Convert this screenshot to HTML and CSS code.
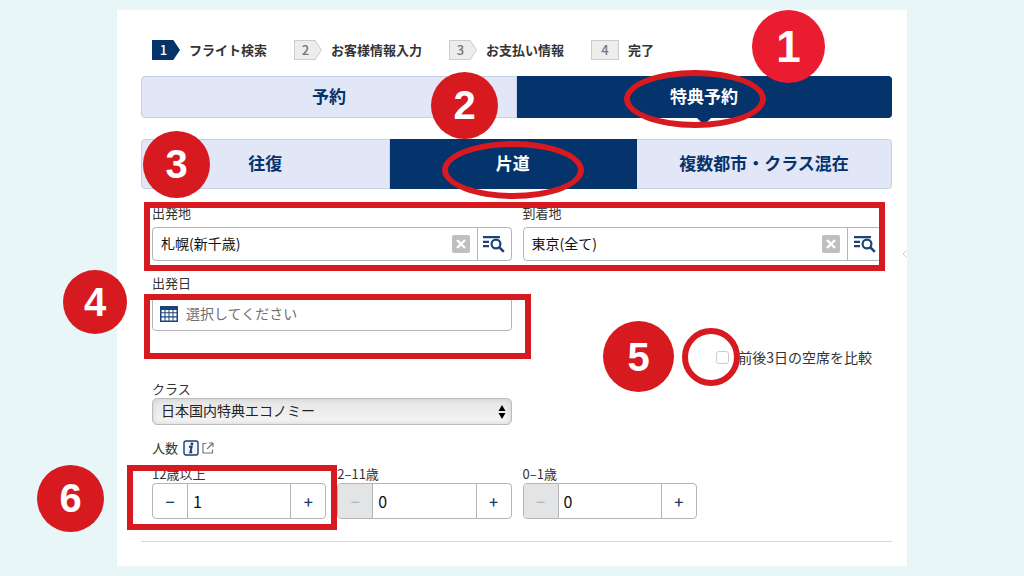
FILE: index.html
```html
<!DOCTYPE html>
<html lang="ja">
<head>
    <meta charset="UTF-8">
    <meta name="viewport" content="width=device-width, initial-scale=1.0">
    <title>特典予約 フライト検索</title>
    <link rel="stylesheet" href="styles.css">
</head>
<body>
    <!-- Shared icons -->
    <svg class="sprite" aria-hidden="true">
        <symbol id="icon-list-search" viewBox="0 0 22 18">
            <path d="M0 2.2h17M0 6.8h6M0 11.2h6" fill="none" stroke="currentColor" stroke-width="2.2"/>
            <circle cx="13" cy="9" r="4.4" fill="none" stroke="currentColor" stroke-width="2.2"/>
            <path d="M16.2 12.2l4.6 4.6" fill="none" stroke="currentColor" stroke-width="2.6"/>
        </symbol>
        <symbol id="icon-clear" viewBox="0 0 18 18">
            <rect width="18" height="18" rx="2" fill="#bfbfbf"/>
            <path d="M5 5l8 8M13 5l-8 8" stroke="#fff" stroke-width="2.4"/>
        </symbol>
    </svg>

    <main class="panel">
        <ol class="steps">
            <li class="step current"><span class="step-no">1</span>フライト検索</li>
            <li class="step"><span class="step-no">2</span>お客様情報入力</li>
            <li class="step"><span class="step-no">3</span>お支払い情報</li>
            <li class="step last"><span class="step-no">4</span>完了</li>
        </ol>

        <div class="tabs main-tabs">
            <button type="button" class="tab">予約</button>
            <button type="button" class="tab active">特典予約
                <span class="mark oval oval-award"></span>
            </button>
            <span class="badge badge-1">1</span>
            <span class="badge badge-2">2</span>
        </div>

        <div class="tabs trip-tabs">
            <button type="button" class="tab">往復</button>
            <button type="button" class="tab active">片道
                <span class="mark oval oval-oneway"></span>
            </button>
            <button type="button" class="tab">複数都市・クラス混在</button>
            <span class="badge badge-3">3</span>
        </div>

        <form class="search-form">
            <div class="row places">
                <div class="field">
                    <label for="from">出発地</label>
                    <div class="box">
                        <input type="text" id="from" value="札幌(新千歳)">
                        <button type="button" class="clear" aria-label="クリア"><svg><use href="#icon-clear"/></svg></button>
                        <button type="button" class="lookup" aria-label="出発地を検索"><svg><use href="#icon-list-search"/></svg></button>
                    </div>
                </div>
                <div class="field">
                    <label for="to">到着地</label>
                    <div class="box">
                        <input type="text" id="to" value="東京(全て)">
                        <button type="button" class="clear" aria-label="クリア"><svg><use href="#icon-clear"/></svg></button>
                        <button type="button" class="lookup" aria-label="到着地を検索"><svg><use href="#icon-list-search"/></svg></button>
                    </div>
                </div>
                <span class="mark frame-places"></span>
            </div>

            <div class="row dates">
                <div class="field">
                    <label for="date">出発日</label>
                    <div class="box">
                        <svg class="calendar" viewBox="0 0 18 16" aria-hidden="true">
                            <rect width="18" height="16" fill="#1c4478"/>
                            <path d="M1.5 4h3v2.3h-3zM5.5 4h3v2.3h-3zM9.5 4h3v2.3h-3zM13.5 4h3v2.3h-3zM1.5 7.3h3v3h-3zM5.5 7.3h3v3h-3zM9.5 7.3h3v3h-3zM13.5 7.3h3v3h-3zM1.5 11.4h3v3h-3zM5.5 11.4h3v3h-3zM9.5 11.4h3v3h-3zM13.5 11.4h3v3h-3z" fill="#fff"/>
                        </svg>
                        <input type="text" id="date" placeholder="選択してください">
                    </div>
                    <span class="mark frame-date"></span>
                </div>
                <span class="badge badge-4">4</span>
            </div>

            <div class="compare">
                <input type="checkbox" id="compare">
                <label for="compare">前後3日の空席を比較</label>
                <span class="mark oval oval-compare"></span>
                <span class="badge badge-5">5</span>
            </div>

            <div class="row">
                <div class="field">
                    <label for="cabin">クラス</label>
                    <div class="select">
                        <select id="cabin">
                            <option>日本国内特典エコノミー</option>
                        </select>
                        <svg class="arrows" viewBox="0 0 8 14" aria-hidden="true"><path d="M4 0l3.5 6h-7zM4 14l3.5-6h-7z"/></svg>
                    </div>
                </div>
            </div>

            <div class="people-title">
                人数
                <a href="#" aria-label="人数について">
                    <svg class="info" viewBox="0 0 16 16">
                        <rect x="1" y="1" width="14" height="14" rx="2" fill="#f3f6fb" stroke="#1c3d70" stroke-width="1.4"/>
                        <circle cx="8.9" cy="4" r="1.4" fill="#1c3d70"/>
                        <path d="M6 6.8h2.7L7.3 12.2h1.9" fill="none" stroke="#1c3d70" stroke-width="1.9"/>
                    </svg>
                    <svg class="external" viewBox="0 0 12 12">
                        <path d="M4.5 1.5H1v9.5h9.5V7.5M7 1h4v4M11 1L5 7" fill="none" stroke="#777" stroke-width="1.2"/>
                    </svg>
                </a>
            </div>

            <div class="people">
                <div class="field">
                    <label for="adult">12歳以上</label>
                    <div class="stepper">
                        <button type="button" aria-label="減らす">−</button>
                        <input type="text" id="adult" value="1">
                        <button type="button" aria-label="増やす">+</button>
                    </div>
                    <span class="mark frame-adult"></span>
                    <span class="badge badge-6">6</span>
                </div>
                <div class="field">
                    <label for="child">2–11歳</label>
                    <div class="stepper">
                        <button type="button" aria-label="減らす" disabled>−</button>
                        <input type="text" id="child" value="0">
                        <button type="button" aria-label="増やす">+</button>
                    </div>
                </div>
                <div class="field">
                    <label for="infant">0–1歳</label>
                    <div class="stepper">
                        <button type="button" aria-label="減らす" disabled>−</button>
                        <input type="text" id="infant" value="0">
                        <button type="button" aria-label="増やす">+</button>
                    </div>
                </div>
            </div>
        </form>

        <hr>
        <svg class="side-arrow" viewBox="0 0 5 8" aria-hidden="true"><path d="M4.5 .5L1 4l3.5 3.5" fill="none" stroke="#ccc"/></svg>
    </main>
</body>
</html>
```
FILE: styles.css
```css
* {
    box-sizing: border-box;
}

body {
    margin: 0;
    padding: 10px;
    background: #e9f6f8;
    color: #333;
    font-family: "Noto Sans CJK JP", sans-serif;
    font-size: 14px;
}

button,
input,
select {
    margin: 0;
    padding: 0;
    border: none;
    background: none;
    color: inherit;
    font: inherit;
}

.sprite {
    display: none;
}

.panel {
    position: relative;
    max-width: 790px;
    margin: 0 auto;
    padding: 30px 15px 24px 24px;
    background: #fff;
}

/* Progress steps */
.steps {
    display: flex;
    gap: 27px;
    margin: 0 0 16px;
    padding: 0 0 0 11px;
    list-style: none;
}

.step {
    display: flex;
    align-items: center;
    gap: 9px;
    font-size: 13px;
    line-height: 20px;
    font-weight: bold;
}

.step-no {
    position: relative;
    z-index: 0;
    width: 28px;
    height: 20px;
    padding-right: 5px;
    background: #ccc;
    color: #777;
    text-align: center;
    font-weight: 500;
    clip-path: polygon(0 0, 76% 0, 100% 50%, 76% 100%, 0 100%);
}

.step-no::before {
    content: "";
    position: absolute;
    z-index: -1;
    inset: 1px;
    background: #ededed;
    clip-path: polygon(0 0, 76% 0, 100% 50%, 76% 100%, 0 100%);
}

.step.current .step-no,
.step.current .step-no::before {
    background: #05336b;
    color: #fff;
}

.step.last .step-no {
    padding-right: 0;
}

.step.last .step-no,
.step.last .step-no::before {
    clip-path: none;
}

/* Tabs */
.tabs {
    position: relative;
    display: flex;
}

.tab {
    position: relative;
    flex: 1;
    padding-bottom: 2px;
    border: 1px solid #c6d0e4;
    background: #e1e7f7;
    color: #05336b;
    font-size: 17px;
    line-height: 24px;
    font-weight: bold;
}

.tab:first-child {
    border-radius: 4px 0 0 4px;
}

.tab:nth-of-type(n + 2) {
    border-left: none;
}

.tab.active {
    border-color: #05336b;
    background: #05336b;
    color: #fff;
}

.main-tabs {
    height: 42px;
    margin-bottom: 21px;
}

.main-tabs .active {
    border-radius: 0 4px 4px 0;
}

.main-tabs .active::after {
    content: "";
    position: absolute;
    top: 100%;
    left: 50%;
    margin-left: -8px;
    border: 8px solid transparent;
    border-top-color: #05336b;
    border-bottom: none;
}

.trip-tabs {
    height: 50px;
    margin-bottom: 15px;
}

.trip-tabs .tab:last-of-type {
    flex-grow: 1.03;
    border-radius: 0 4px 4px 0;
}

/* Form */
.search-form {
    padding: 0 10px 0 11px;
}

.row {
    position: relative;
    display: grid;
    grid-template-columns: 1fr 1fr;
    gap: 11px;
}

.field {
    position: relative;
}

.field > label {
    display: block;
    font-size: 13px;
    line-height: 18px;
}

.places {
    margin-bottom: 13px;
}

.dates {
    margin-bottom: 16px;
}

.box {
    display: flex;
    align-items: center;
    height: 34px;
    margin-top: 5px;
    border: 1px solid #b5b5b5;
    border-radius: 4px;
}

.box input {
    flex: 1;
    min-width: 0;
    height: 32px;
    padding: 0 0 2px 8px;
    color: #111;
}

.box input::placeholder {
    color: #707070;
}

.clear,
.clear svg {
    display: block;
    width: 18px;
    height: 18px;
}

.lookup {
    display: flex;
    align-items: center;
    justify-content: center;
    width: 34px;
    height: 32px;
    margin-left: 7px;
    border-left: 1px solid #b5b5b5;
    color: #1c4478;
}

.lookup svg {
    width: 22px;
    height: 18px;
}

.calendar {
    width: 18px;
    height: 16px;
    margin-left: 7px;
}

.compare {
    position: relative;
    display: flex;
    align-items: center;
    justify-content: flex-end;
    gap: 9px;
    margin-bottom: 13px;
    padding-right: 10px;
    line-height: 20px;
}

.compare input {
    appearance: none;
    width: 13px;
    height: 13px;
    border: 1px solid #ccc;
    border-radius: 3px;
}

.select {
    position: relative;
}

.select select {
    display: block;
    appearance: none;
    width: 100%;
    height: 27px;
    padding: 0 24px 3px 8px;
    border: 1px solid #bbb;
    border-radius: 5px;
    background: linear-gradient(#e4e4e4, #f6f6f6);
    box-shadow: inset 0 0 5px #ccc;
    color: #222;
}

.arrows {
    position: absolute;
    top: 7px;
    right: 6px;
    width: 8px;
    height: 14px;
}

.people-title {
    display: flex;
    align-items: center;
    gap: 5px;
    margin: 14px 0 8px;
    font-size: 13px;
    line-height: 18px;
}

.people-title a {
    display: flex;
    align-items: center;
    gap: 3px;
}

.info {
    width: 16px;
    height: 16px;
}

.external {
    width: 12px;
    height: 12px;
}

.people {
    display: grid;
    grid-template-columns: repeat(4, minmax(0, 1fr));
    gap: 11px;
}

.stepper {
    display: flex;
    height: 36px;
    border: 1px solid #b5b5b5;
    border-radius: 4px;
    overflow: hidden;
}

.stepper button {
    width: 34px;
    color: #1c3d70;
    font-size: 16px;
    line-height: 32px;
    font-weight: 500;
}

.stepper button:disabled {
    background: #e3e4e6;
    color: #b5b5b5;
}

.stepper input {
    flex: 1;
    min-width: 0;
    padding-left: 5px;
    border: 1px solid #b5b5b5;
    border-width: 0 1px;
    color: #111;
    font-size: 16px;
}

hr {
    margin: 22px 0 0;
    border: none;
    border-top: 1px solid #cfd6e6;
}

.side-arrow {
    position: absolute;
    top: 240px;
    right: 0;
    width: 5px;
    height: 8px;
}

/* Red guide marks laid over the form */
.mark {
    position: absolute;
    z-index: 2;
    border: 6px solid #d71920;
    pointer-events: none;
}

.oval {
    border-radius: 50%;
}

.oval-award,
.oval-oneway {
    left: 50%;
    width: 142px;
    height: 58px;
    margin-left: -80px;
}

.oval-award {
    top: -7px;
}

.oval-oneway {
    top: 1px;
    margin-left: -71px;
}

.oval-compare {
    top: -19px;
    right: 142px;
    width: 58px;
    height: 58px;
}

.frame-places {
    inset: -2px -3px -10px -8px;
}

.frame-date {
    inset: 20px -19px -28px -8px;
}

.frame-adult {
    inset: 0 -11px -11px -25px;
}

.badge {
    position: absolute;
    z-index: 3;
    display: flex;
    align-items: center;
    justify-content: center;
    width: 67px;
    height: 67px;
    border-radius: 50%;
    background: #d71920;
    color: #fff;
    font-family: "Liberation Sans", Arial, sans-serif;
    font-size: 40px;
    font-weight: bold;
}

.badge-1 {
    top: -66px;
    right: 67px;
    width: 73px;
    height: 73px;
    background: #ea1c2f;
    font-size: 44px;
}

.badge-2 {
    top: -4px;
    right: 394px;
}

.badge-3 {
    top: -8px;
    left: 2px;
}

.badge-4 {
    top: -4px;
    left: -89px;
    width: 64px;
    height: 64px;
}

.badge-5 {
    top: -26px;
    right: 208px;
    width: 71px;
    height: 71px;
}

.badge-6 {
    top: 0;
    left: -115px;
}
```
